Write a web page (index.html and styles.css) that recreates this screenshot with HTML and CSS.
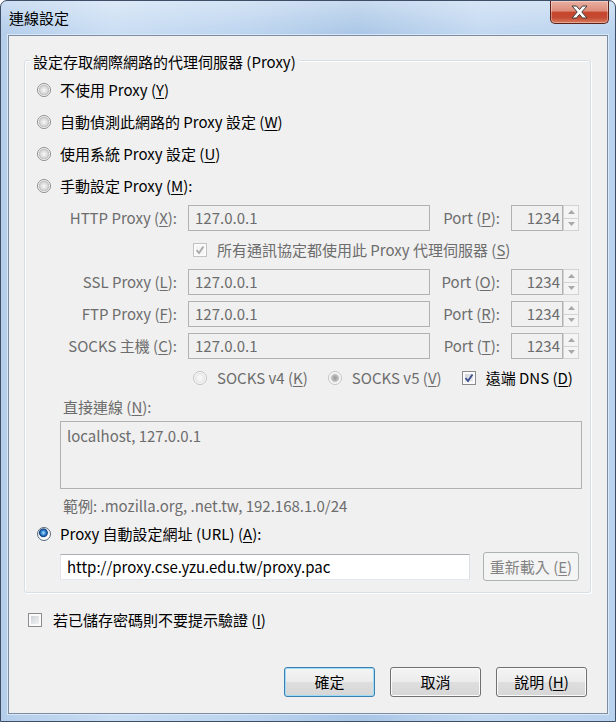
FILE: index.html
```html
<!DOCTYPE html>
<html lang="zh-Hant">
<head>
<meta charset="utf-8">
<title>連線設定</title>
<link rel="stylesheet" href="styles.css">
</head>
<body>
<div class="window">
  <div class="titlebar">
    <span class="title">連線設定</span>
    <div class="close">
      <svg width="17" height="14" viewBox="0 0 17 14"><path d="M1 1h4.5l3 3.6 3-3.6h4.5l-5.2 6 5.2 6h-4.5l-3-3.6-3 3.6h-4.5l5.2-6z" fill="#fff" stroke="#3c3c3c" stroke-width="1" stroke-linejoin="round"/></svg>
    </div>
  </div>
  <div class="client">
    <div class="group">
      <span class="legend">設定存取網際網路的代理伺服器 (Proxy)</span>
      <div class="opt"><span class="radio"></span><span>不使用 Proxy (<u>Y</u>)</span></div>
      <div class="opt"><span class="radio"></span><span>自動偵測此網路的 Proxy 設定 (<u>W</u>)</span></div>
      <div class="opt"><span class="radio"></span><span>使用系統 Proxy 設定 (<u>U</u>)</span></div>
      <div class="opt"><span class="radio"></span><span>手動設定 Proxy (<u>M</u>):</span></div>
      <div class="manual">
        <span class="lbl">HTTP Proxy (<u>X</u>):</span>
        <span class="field">127.0.0.1</span>
        <span class="plbl">Port (<u>P</u>):</span>
        <span class="port"><span class="num">1234</span><span class="spin"><span class="sb"><svg width="7" height="4" viewBox="0 0 7 4"><path d="M0 4L3.5 0 7 4z" fill="#a8a8a8"/></svg></span><span class="sb"><svg width="7" height="4" viewBox="0 0 7 4"><path d="M0 0L3.5 4 7 0z" fill="#a8a8a8"/></svg></span></span></span>

        <div class="share"><span class="cb dis"><svg width="14" height="14" viewBox="0 0 14 14"><path d="M3.5 7l2.5 3 4.5-6.5" fill="none" stroke="#a9a9a9" stroke-width="1.8"/></svg></span><span>所有通訊協定都使用此 Proxy 代理伺服器 (<u>S</u>)</span></div>

        <span class="lbl">SSL Proxy (<u>L</u>):</span>
        <span class="field">127.0.0.1</span>
        <span class="plbl">Port (<u>O</u>):</span>
        <span class="port"><span class="num">1234</span><span class="spin"><span class="sb"><svg width="7" height="4" viewBox="0 0 7 4"><path d="M0 4L3.5 0 7 4z" fill="#a8a8a8"/></svg></span><span class="sb"><svg width="7" height="4" viewBox="0 0 7 4"><path d="M0 0L3.5 4 7 0z" fill="#a8a8a8"/></svg></span></span></span>

        <span class="lbl">FTP Proxy (<u>F</u>):</span>
        <span class="field">127.0.0.1</span>
        <span class="plbl">Port (<u>R</u>):</span>
        <span class="port"><span class="num">1234</span><span class="spin"><span class="sb"><svg width="7" height="4" viewBox="0 0 7 4"><path d="M0 4L3.5 0 7 4z" fill="#a8a8a8"/></svg></span><span class="sb"><svg width="7" height="4" viewBox="0 0 7 4"><path d="M0 0L3.5 4 7 0z" fill="#a8a8a8"/></svg></span></span></span>

        <span class="lbl">SOCKS 主機 (<u>C</u>):</span>
        <span class="field">127.0.0.1</span>
        <span class="plbl">Port (<u>T</u>):</span>
        <span class="port"><span class="num">1234</span><span class="spin"><span class="sb"><svg width="7" height="4" viewBox="0 0 7 4"><path d="M0 4L3.5 0 7 4z" fill="#a8a8a8"/></svg></span><span class="sb"><svg width="7" height="4" viewBox="0 0 7 4"><path d="M0 0L3.5 4 7 0z" fill="#a8a8a8"/></svg></span></span></span>

        <div class="socksver">
          <span class="item"><span class="radio dis"></span><span>SOCKS v4 (<u>K</u>)</span></span>
          <span class="item"><span class="radio dis on"></span><span>SOCKS v5 (<u>V</u>)</span></span>
          <span class="item"><span class="cb"><svg width="14" height="14" viewBox="0 0 14 14"><path d="M3.5 7l2.5 3 4.5-6.5" fill="none" stroke="#3e4f8e" stroke-width="1.9"/></svg></span><span class="en">遠端 DNS (<u>D</u>)</span></span>
        </div>
      </div>
      <div class="direct-lbl">直接連線 (<u>N</u>):</div>
      <div class="textarea">localhost, 127.0.0.1</div>
      <div class="example">範例: .mozilla.org, .net.tw, 192.168.1.0/24</div>
      <div class="opt pac"><span class="radio sel"></span><span>Proxy 自動設定網址 (URL) (<u>A</u>):</span></div>
      <div class="url-row">
        <span class="url">http://proxy.cse.yzu.edu.tw/proxy.pac</span>
        <span class="btn dis">重新載入 (<u>E</u>)</span>
      </div>
    </div>
    <div class="nopw"><span class="cb"></span><span>若已儲存密碼則不要提示驗證 (<u>I</u>)</span></div>
    <div class="buttons">
      <span class="btn default">確定</span>
      <span class="btn">取消</span>
      <span class="btn">說明 (<u>H</u>)</span>
    </div>
  </div>
</div>
</body>
</html>
```
FILE: styles.css
```css
* { box-sizing: border-box; }
html, body { margin: 0; padding: 0; }
body {
  width: 616px;
  height: 722px;
  overflow: hidden;
  font-family: "Noto Sans CJK TC", "Noto Sans CJK SC", sans-serif;
  font-size: 15px;
  line-height: 20px;
  color: #000;
  background: #fff;
}
u { text-decoration: underline; text-underline-offset: 2px; }

.window {
  position: relative;
  width: 616px;
  height: 722px;
  border: 1px solid #3d4e66;
  border-radius: 7px 7px 0 0;
  padding: 0 7px;
  background:
    linear-gradient(180deg, rgba(255,255,255,0.35) 0, rgba(255,255,255,0) 34px),
    linear-gradient(90deg, #b3cdeb 0%, #c9ddf3 18%, #bcd4ef 40%, #a9c6e6 58%, #c2d8f1 78%, #b9d2ee 100%);
}
.titlebar {
  height: 34px;
  display: flex;
  align-items: center;
  padding-left: 1px;
}
.title { font-size: 15px; color: #000; }
.close {
  position: absolute;
  top: 0;
  right: 6px;
  width: 59px;
  height: 23px;
  border: 1px solid #5b2219;
  border-top: none;
  border-radius: 0 0 5px 5px;
  background: linear-gradient(180deg, #eab0a2 0%, #dd8d7a 45%, #c7452d 52%, #c44a31 75%, #d97c60 100%);
  box-shadow: inset 0 0 0 1px rgba(255,255,255,0.35);
  display: flex;
  align-items: center;
  justify-content: center;
}
.close svg { display: block; }

.client {
  height: 679px;
  border: 1px solid #7b8ca3;
  background: #f0f0f0;
  box-shadow: 0 0 0 1px #dbe8f7;
}

.group {
  position: relative;
  margin: 24px 16px 0 15px;
  border: 1px solid #d5dfe5;
  border-radius: 3px;
  box-shadow: inset 1px 1px 0 #fff, 1px 1px 0 #fff;
  padding: 13px 7px 11px 12px;
}
.legend {
  position: absolute;
  top: -9px;
  left: 5px;
  padding: 0 3px;
  background: #f0f0f0;
  line-height: 20px;
}

.opt {
  height: 32px;
  display: flex;
  align-items: center;
  gap: 9px;
}
.opt.pac { height: 26px; }

.radio {
  flex: none;
  width: 14px;
  height: 14px;
  border-radius: 50%;
  border: 1px solid #8a8c8d;
  background: radial-gradient(circle at 50% 50%, #f7f7f7 0, #e4e4e4 2.5px, #cfcfcf 4.2px, #bdbdbd 4.9px, #fbfbfb 5.6px);
}
.radio.dis {
  border-color: #c2c3c4;
  background: radial-gradient(circle at 50% 50%, #fafafa 0, #f1f1f1 3px, #e6e6e6 4.8px, #fcfcfc 5.6px);
}
.radio.dis.on {
  background: radial-gradient(circle at 50% 50%, #9a9a9a 0, #acacac 2px, #c4c4c4 3.5px, #e9e9e9 4.3px, #fcfcfc 5.6px);
}
.radio.sel {
  border-color: #5b6a7a;
  background: radial-gradient(circle at 45% 40%, #bfe6ff 0, #56a7e6 1.5px, #1d5fab 3.2px, #123f7d 4px, #dfe6ec 4.7px, #fafafa 5.6px);
}

.cb {
  flex: none;
  position: relative;
  width: 14px;
  height: 14px;
  border: 1px solid #8a8c8d;
  background: linear-gradient(135deg, #c6cad0 0%, #e3e5e8 55%, #f7f7f7 100%);
  box-shadow: inset 0 0 0 2px #fbfbfb;
}
.cb.dis {
  border-color: #c2c3c4;
  background: #f4f4f4;
}
.cb svg { position: absolute; left: -1px; top: -1px; }

.manual {
  display: grid;
  grid-template-columns: 140px 242px 59px 68px;
  grid-auto-rows: 32px;
  column-gap: 11px;
  align-items: center;
  color: #6d6d6d;
}
.lbl { text-align: right; white-space: nowrap; }
.plbl { white-space: nowrap; text-align: right; }
.field {
  height: 26px;
  border: 1px solid #b1b1b1;
  padding-left: 6px;
  line-height: 24px;
  color: #6d6d6d;
}
.port {
  display: flex;
  height: 26px;
}
.num {
  flex: 1;
  border: 1px solid #b1b1b1;
  text-align: right;
  padding-right: 2px;
  line-height: 24px;
}
.spin {
  width: 16px;
  display: flex;
  flex-direction: column;
}
.sb {
  flex: 1;
  border: 1px solid #d3d3d3;
  background: #f4f4f4;
  display: flex;
  align-items: center;
  justify-content: center;
}
.sb + .sb { border-top: none; }
.sb svg { display: block; }

.share, .socksver {
  grid-column: 2 / 5;
  display: flex;
  align-items: center;
  padding-left: 5px;
  white-space: nowrap;
}
.share { gap: 10px; }
.socksver { gap: 20px; }
.socksver .item { display: flex; align-items: center; gap: 10px; }
.socksver .en { color: #000; }

.direct-lbl {
  height: 26px;
  display: flex;
  align-items: center;
  margin-left: 26px;
  color: #6d6d6d;
}
.textarea {
  margin: 1px 0 0 23px;
  width: 522px;
  height: 68px;
  border: 1px solid #b1b1b1;
  padding: 4px 6px;
  color: #6d6d6d;
}
.example {
  margin: 2px 0 0 26px;
  height: 30px;
  line-height: 30px;
  color: #6d6d6d;
}
.url-row {
  margin: 5px 0 0 23px;
  height: 29px;
  display: flex;
  align-items: center;
  gap: 13px;
}
.url {
  width: 410px;
  height: 26px;
  border: 1px solid #abadb3;
  border-color: #abadb3 #dbdfe6 #e3e9ef #e2e3ea;
  background: #fff;
  padding-left: 6px;
  line-height: 24px;
  color: #000;
}

.btn {
  display: flex;
  align-items: center;
  justify-content: center;
  width: 91px;
  height: 30px;
  border: 1px solid #707070;
  border-radius: 3px;
  background: linear-gradient(180deg, #f4f4f4 0%, #ececec 48%, #dedede 52%, #d6d6d6 100%);
  box-shadow: inset 0 0 0 1px #fbfbfb;
  color: #000;
  white-space: nowrap;
}
.btn.default {
  border-color: #3c7fb1;
  box-shadow: inset 0 0 0 1px #9fdcf7;
}
.btn.dis {
  width: 96px;
  height: 29px;
  border-color: #adb2b5;
  background: #f4f4f4;
  box-shadow: none;
  color: #838383;
}

.nopw {
  margin: 17px 0 0 19px;
  height: 20px;
  display: flex;
  align-items: center;
  gap: 11px;
}
.buttons {
  margin-top: 37px;
  display: flex;
  justify-content: flex-end;
  gap: 15px;
  padding-right: 20px;
}
```
